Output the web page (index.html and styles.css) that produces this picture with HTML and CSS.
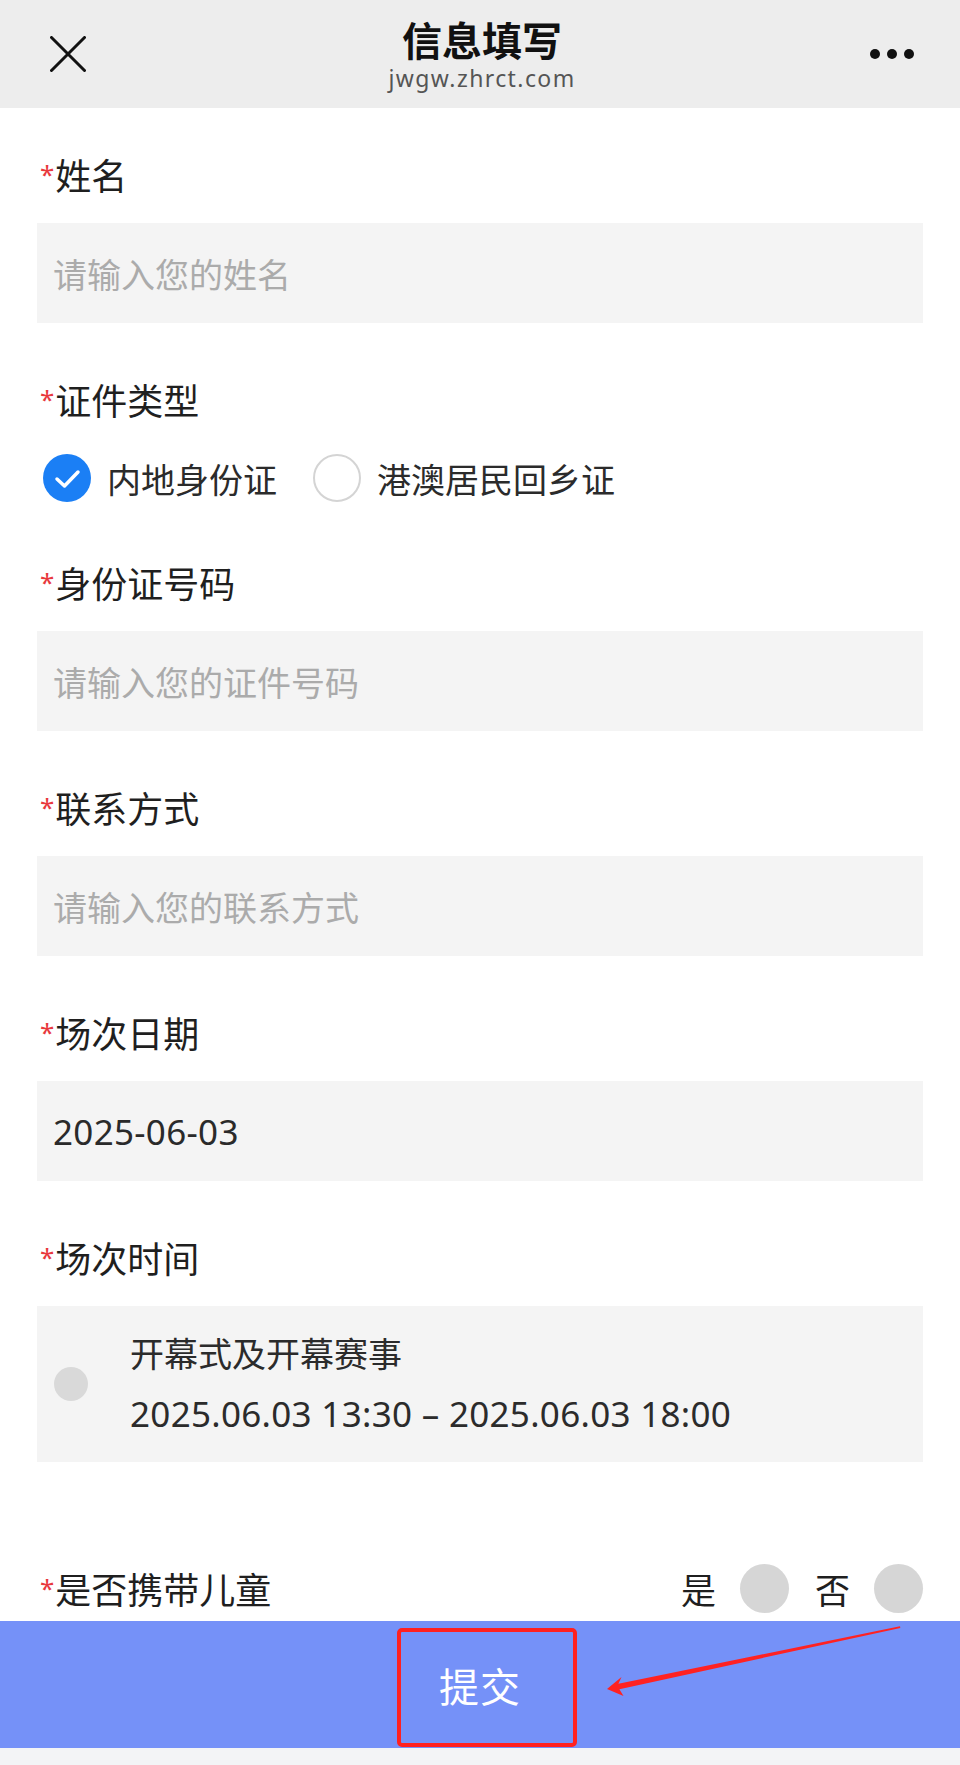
FILE: index.html
```html
<!DOCTYPE html>
<html lang="zh-CN">
<head>
<meta charset="utf-8">
<title>信息填写</title>
<link rel="stylesheet" href="styles.css">
</head>
<body>
<header class="nav">
  <div class="nav-close">
    <svg viewBox="0 0 36 36" width="36" height="36"><path d="M1.5 1.5 L34.5 34.5 M34.5 1.5 L1.5 34.5" stroke="#111" stroke-width="3" stroke-linecap="round" fill="none"/></svg>
  </div>
  <div class="nav-title">
    <div class="title">信息填写</div>
    <div class="url">jwgw.zhrct.com</div>
  </div>
  <div class="nav-more"><span class="dot"></span><span class="dot"></span><span class="dot"></span></div>
</header>

<main class="form">
  <section class="field">
    <div class="label"><span class="req">*</span>姓名</div>
    <div class="input placeholder">请输入您的姓名</div>
  </section>

  <section class="field">
    <div class="label"><span class="req">*</span>证件类型</div>
    <div class="radio-group">
      <div class="radio checked">
        <span class="radio-icon"><svg viewBox="0 0 48 48" width="48" height="48"><path d="M14 25 L21.5 32 L35 18" stroke="#fff" stroke-width="3.5" stroke-linecap="round" stroke-linejoin="round" fill="none"/></svg></span>
        <span class="radio-text">内地身份证</span>
      </div>
      <div class="radio">
        <span class="radio-icon"></span>
        <span class="radio-text">港澳居民回乡证</span>
      </div>
    </div>
  </section>

  <section class="field">
    <div class="label"><span class="req">*</span>身份证号码</div>
    <div class="input placeholder">请输入您的证件号码</div>
  </section>

  <section class="field">
    <div class="label"><span class="req">*</span>联系方式</div>
    <div class="input placeholder">请输入您的联系方式</div>
  </section>

  <section class="field">
    <div class="label"><span class="req">*</span>场次日期</div>
    <div class="input value num">2025-06-03</div>
  </section>

  <section class="field">
    <div class="label"><span class="req">*</span>场次时间</div>
    <div class="session">
      <span class="session-dot"></span>
      <div class="session-text">
        <div class="session-line">开幕式及开幕赛事</div>
        <div class="session-line num">2025.06.03 13:30 – 2025.06.03 18:00</div>
      </div>
    </div>
  </section>

  <section class="child-row">
    <div class="label"><span class="req">*</span>是否携带儿童</div>
    <div class="yn">
      <span class="yn-text">是</span><span class="yn-dot"></span>
      <span class="yn-text">否</span><span class="yn-dot"></span>
    </div>
  </section>
</main>

<footer class="submit-bar">
  <span class="submit-text">提交</span>
  <span class="annot-box"></span>
  <svg class="annot-arrow" viewBox="0 0 960 127" width="960" height="127">
    <polygon points="607,68 621.5,56 618.4,62.8 900,5.2 900.3,6.9 619.4,68.2 623.5,75" fill="#ff2222"/>
  </svg>
</footer>
<div class="bottom-strip"></div>
</body>
</html>
```

FILE: styles.css
```css
* { box-sizing: border-box; }
html, body {
  margin: 0;
  padding: 0;
  background: #ffffff;
}
body {
  width: 960px;
  height: 1765px;
  overflow: hidden;
  font-family: "Noto Sans", "Noto Sans CJK SC", sans-serif;
  color: #1f1f1f;
}

/* nav */
.nav {
  height: 108px;
  background: #ededed;
  display: grid;
  grid-template-columns: 1fr auto 1fr;
  align-items: center;
  padding: 0 46px 0 50px;
}
.nav-close { display: flex; align-items: center; }
.nav-close svg { display: block; }
.nav-title {
  text-align: center;
  align-self: start;
  padding-top: 19px;
}
.title {
  font-size: 40px;
  line-height: 44px;
  font-weight: 700;
  color: #111;
}
.url {
  margin-top: 2px;
  font-size: 23px;
  line-height: 26px;
  letter-spacing: 1.4px;
  color: #555;
}
.nav-more {
  display: flex;
  justify-content: flex-end;
  gap: 7px;
}
.dot {
  width: 10px;
  height: 10px;
  border-radius: 50%;
  background: #111;
}

/* form */
.form {
  display: flow-root;
  padding: 41px 37px 3px;
}
.field {
  display: flow-root;
  margin-bottom: 51px;
}
.field:last-of-type { margin-bottom: 0; }
.label {
  font-size: 36px;
  line-height: 50px;
  height: 50px;
  color: #1f1f1f;
  padding-left: 3px;
}
.req {
  color: #e8383d;
  font-size: 26px;
  vertical-align: 6px;
  margin-right: 1px;
}
.input {
  margin-top: 24px;
  height: 100px;
  background: #f4f4f4;
  display: flex;
  align-items: center;
  padding-left: 16px;
  font-size: 34px;
}
.placeholder { color: #ababab; }
.value { color: #2a2a2a; }
.num {
  font-size: 35px;
  letter-spacing: 0.3px;
}

/* radios */
.radio-group {
  display: flex;
  align-items: center;
  height: 50px;
  margin-top: 29px;
  margin-bottom: 3px;
  padding-left: 6px;
  gap: 36px;
}
.radio {
  display: flex;
  align-items: center;
  gap: 16px;
}
.radio-icon {
  width: 48px;
  height: 48px;
  border-radius: 50%;
  border: 2px solid #d4d4d4;
  background: #fff;
  display: flex;
  align-items: center;
  justify-content: center;
}
.radio.checked .radio-icon {
  border: none;
  background: #1b7ff5;
}
.radio-icon svg { display: block; }
.radio-text {
  font-size: 34px;
  color: #2b2b2b;
}

/* session */
.session {
  margin-top: 24px;
  height: 156px;
  background: #f4f4f4;
  display: flex;
  align-items: center;
  padding-left: 17px;
  gap: 42px;
}
.session-dot {
  width: 34px;
  height: 34px;
  border-radius: 50%;
  background: #d9d9d9;
  flex: none;
}
.session-line {
  font-size: 34px;
  line-height: 60px;
  color: #2b2b2b;
}
.session-line.num { font-size: 35px; }

/* child row */
.child-row {
  margin-top: 96px;
  height: 60px;
  display: flex;
  align-items: center;
  justify-content: space-between;
}
.child-row .label { line-height: 60px; height: 60px; }
.yn {
  display: flex;
  align-items: center;
}
.yn-text {
  font-size: 35px;
  color: #1f1f1f;
  margin-right: 24px;
}
.yn-dot {
  width: 49px;
  height: 49px;
  border-radius: 50%;
  background: #d6d6d6;
}
.yn-dot:nth-of-type(2) { margin-right: 26px; }

/* submit */
.submit-bar {
  position: relative;
  height: 127px;
  background: #7591f8;
  display: flex;
  align-items: center;
  justify-content: center;
}
.submit-text {
  font-size: 40px;
  color: #ffffff;
  letter-spacing: 1px;
}
.annot-box {
  position: absolute;
  left: 397px;
  top: 7px;
  width: 180px;
  height: 119px;
  border: 4.5px solid #ff2020;
  border-radius: 5px;
}
.annot-arrow {
  position: absolute;
  left: 0;
  top: 0;
}
.bottom-strip {
  height: 17px;
  background: #f3f4f6;
}
```
